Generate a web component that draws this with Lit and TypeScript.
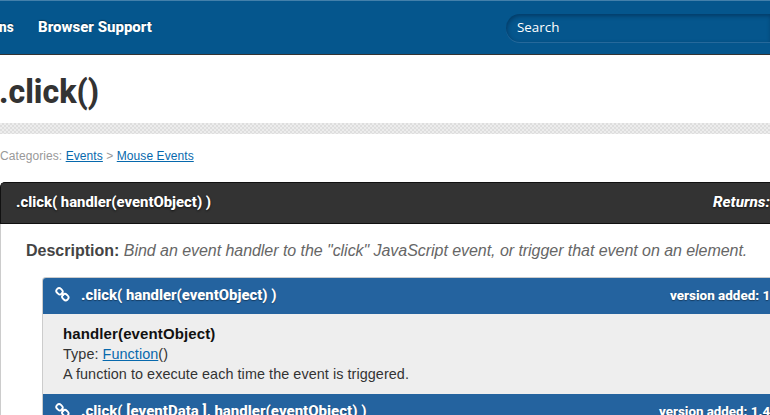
import { LitElement, html, css, svg } from "lit";
import { customElement, property, state } from "lit/decorators.js";

/* Heading text condensed or widened to a fixed advance width. */
@customElement("fit-text")
class FitText extends LitElement {
  @property({ type: Number }) width = 100;
  @state() private scale = 1;

  static styles = css`
    :host { display: block; flex: none; white-space: pre; }
    .box { display: block; }
    .text { display: inline-block; transform-origin: 0 50%; }
  `;

  firstUpdated() {
    const el = this.renderRoot.querySelector(".text") as HTMLElement;
    this.scale = this.width / el.offsetWidth;
  }

  render() {
    return html`<span class="box" style="width:${this.width}px"
      ><span class="text" style="transform:scaleX(${this.scale})"><slot></slot></span></span>`;
  }
}

const link = svg`
  <g fill="none" stroke="currentColor" stroke-width="2">
    <rect x="1.3" y="1.7" width="7" height="5.8" rx="2.8" transform="rotate(45 4.8 4.6)"></rect>
    <rect x="7.5" y="7.9" width="7" height="5.8" rx="2.8" transform="rotate(45 11 10.8)"></rect>
    <path d="M6.4 6.2L9.4 9.2" stroke-width="1.6"></path>
  </g>`;

@customElement("app-root")
class AppRoot extends LitElement {
  static styles = css`
    :host {
      display: block; width: 770px; height: 415px; overflow: hidden;
      background: #fff; color: #333;
      font-family: "Liberation Sans", Arial, sans-serif;
    }
    * { box-sizing: border-box; }
    .display { font-family: Roboto, "Open Sans", sans-serif; font-weight: 800; color: #fff; }
    header {
      height: 55px; display: flex; align-items: center; background: #05568d;
      border-top: 1px solid #4380ab; border-bottom: 1px solid #333;
    }
    nav { display: flex; gap: 24px; flex: 1; margin-left: -1px; }
    nav .display { font-size: 14.5px; line-height: 20px; text-shadow: 0 -1px 1px #033655; }
    .search {
      width: 264px; height: 28px; border-radius: 14px 0 0 14px; padding-left: 11px;
      background: #05568d; color: #fff; line-height: 27px; font-size: 13.4px;
      font-family: "Open Sans", "Noto Sans", sans-serif;
      box-shadow: inset 1px 2px 4px rgba(0,20,45,.4), 0 1px 0 #26699b;
    }
    h1 { margin: 0 0 0 -1px; height: 68px; padding-top: 14px; }
    h1 .display { color: #333; font-size: 34px; line-height: 44px; }
    .stripe {
      height: 11px;
      background: repeating-conic-gradient(#dedede 0 25%, #ededed 0 50%) 0 0 / 4px 4px;
    }
    .crumbs { height: 48px; padding-top: 14px; font-size: 12px; line-height: 16px; color: #999; letter-spacing: .08px; }
    a { color: #0769ad; text-decoration: underline; }
    .bar { display: flex; align-items: center; justify-content: space-between; }
    .main {
      height: 42px; background: #333; border: 1px solid #111; border-right: 0;
      border-radius: 5px 0 0 0; padding: 0 0 2px 15px; text-shadow: 0 1px 2px #111;
    }
    .main .display { font-size: 15px; line-height: 20px; }
    .returns { font-style: italic; }
    .body { border-left: 1px solid #ccc; height: 191px; padding: 17px 0 0 25px; }
    .desc { height: 36px; font-size: 16px; line-height: 20px; color: #666; white-space: nowrap; }
    .desc i { letter-spacing: -.047px; }
    .desc b { color: #444; }
    .signatures { margin-left: 16px; border: 1px solid #ccc; border-right: 0; border-radius: 4px 0 0 0; background: #eee; overflow: hidden; }
    .signature { height: 36px; background: #24639f; padding-left: 12px; color: #fff; }
    .signature .display { font-size: 14.5px; line-height: 20px; text-shadow: 0 1px 1px #173d62; }
    .signature .version { font-size: 12.5px; }
    .left { display: flex; align-items: center; gap: 11px; }
    .icon { width: 15px; height: 15px; display: block; margin-top: -3px; }
    .argument { height: 80px; padding: 10px 0 0 20px; font-size: 14.4px; line-height: 20px; letter-spacing: .065px; }
    .argument b { color: #111; font-size: 15px; letter-spacing: .12px; line-height: 19px; }
  `;

  private signature(name: string, width: number, version: string, versionWidth: number) {
    return html`<div class="bar signature">
      <div class="left">
        <svg class="icon" viewBox="0 0 16 16">${link}</svg>
        <fit-text class="display" .width=${width}>${name}</fit-text>
      </div>
      <fit-text class="display version" .width=${versionWidth}>${version}</fit-text>
    </div>`;
  }

  render() {
    return html`
      <header>
        <nav>
          <fit-text class="display" .width=${15}>ns</fit-text>
          <fit-text class="display" .width=${114}>Browser Support</fit-text>
        </nav>
        <div class="search">Search</div>
      </header>
      <h1><fit-text class="display" .width=${100}>.click()</fit-text></h1>
      <div class="stripe"></div>
      <div class="crumbs">Categories: <a>Events</a> &gt; <a>Mouse Events</a></div>
      <div class="bar main">
        <fit-text class="display" .width=${195}>.click( handler(eventObject) )</fit-text>
        <fit-text class="display returns" .width=${57}>Returns:</fit-text>
      </div>
      <div class="body">
        <div class="desc"><b>Description:</b> <i>Bind an event handler to the "click" JavaScript event, or trigger that event on an element.</i></div>
        <div class="signatures">
          ${this.signature(".click( handler(eventObject) )", 196, "version added: 1", 100)}
          <div class="argument">
            <b>handler(eventObject)</b><br>Type: <a>Function</a>()<br>A function to execute each time the event is triggered.
          </div>
          ${this.signature(".click( [eventData ], handler(eventObject) )", 285, "version added: 1.4", 111)}
        </div>
      </div>`;
  }
}
